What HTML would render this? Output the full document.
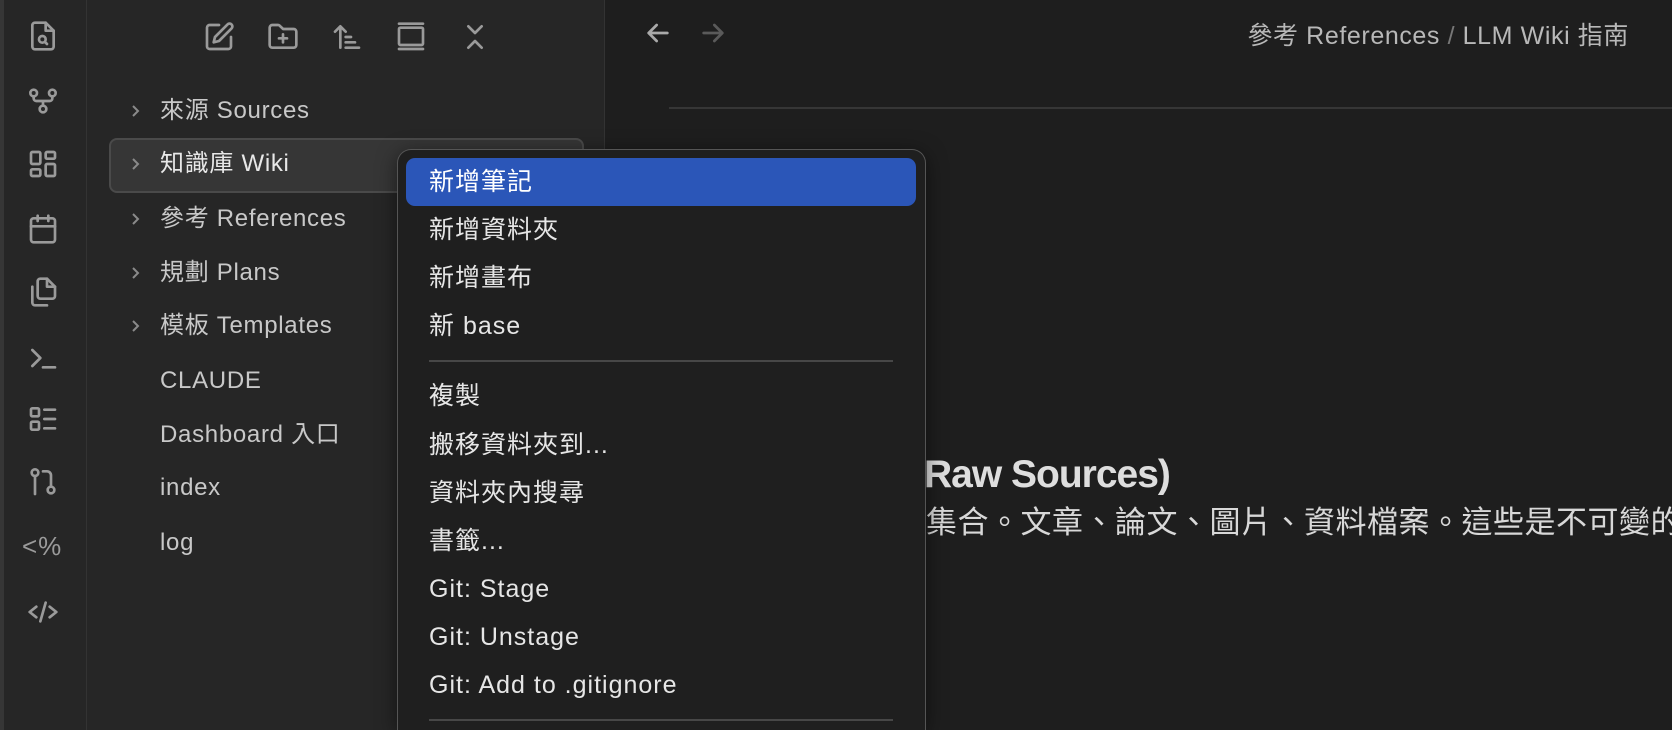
<!DOCTYPE html>
<html><head><meta charset="utf-8"><style>
*{margin:0;padding:0;box-sizing:border-box}
html,body{width:1672px;height:730px;overflow:hidden}
body{background:#1e1e1e;font-family:"Liberation Sans","Noto Sans CJK TC",sans-serif;position:relative;color:#dadada}
#rib{position:absolute;left:0;top:0;width:87px;height:730px;background:#262626;border-left:4px solid #363636;border-right:1px solid #333}
#side{position:absolute;left:87px;top:0;width:518px;height:730px;background:#262626;border-right:1px solid #333}
.ic{position:absolute;width:32px;height:32px;fill:none;stroke:#9a9a9a;stroke-width:2;stroke-linecap:round;stroke-linejoin:round}
.row{position:absolute;left:160px;font-size:24px;letter-spacing:0.7px;color:#c8c8c8;line-height:30px;height:30px;white-space:nowrap}
.chev{position:absolute;left:128px;width:16px;height:16px;fill:none;stroke:#8a8a8a;stroke-width:2}
#sel{position:absolute;left:109px;top:138px;width:475px;height:55px;border:2px solid #4a4a4a;background:#363636;border-radius:8px}
#menu{position:absolute;left:397px;top:149px;width:529px;height:581px;background:#1f1f1f;border:1.5px solid #555;border-bottom:none;border-radius:14px 14px 0 0;box-shadow:0 4px 20px rgba(0,0,0,.5)}
#hl{position:absolute;left:406px;top:158px;width:510px;height:48px;background:#2b56b8;border-radius:9px}
.mi{position:absolute;left:429px;font-size:25px;letter-spacing:1px;color:#e6e6e6;line-height:30px;white-space:nowrap}
.sep{position:absolute;left:429px;width:464px;height:1.5px;background:#474747}
</style></head><body>
<div id="rib"></div>
<div id="side"></div>

<svg class="ic" style="left:27px;top:20px" viewBox="0 0 24 24"><path d="M14 2H6a2 2 0 0 0-2 2v16a2 2 0 0 0 2 2h12a2 2 0 0 0 2-2V8z"/><path d="M14 2v6h6"/><circle cx="11.5" cy="14.5" r="2.5"/><path d="M13.5 16.5l1.5 1.5"/></svg>
<svg class="ic" style="left:27px;top:85px" viewBox="0 0 24 24"><circle cx="5" cy="6" r="2.5"/><circle cx="19" cy="6" r="2.5"/><circle cx="12" cy="18" r="2.5"/><path d="M5 8.5v1.5a2 2 0 0 0 2 2h10a2 2 0 0 0 2-2V8.5M12 12v3.5"/></svg>
<svg class="ic" style="left:27px;top:148px" viewBox="0 0 24 24"><rect x="3" y="3" width="7" height="9" rx="1"/><rect x="14" y="3" width="7" height="5" rx="1"/><rect x="14" y="12" width="7" height="9" rx="1"/><rect x="3" y="16" width="7" height="5" rx="1"/></svg>
<svg class="ic" style="left:27px;top:213px" viewBox="0 0 24 24"><rect x="3" y="4" width="18" height="18" rx="2"/><path d="M16 2v4M8 2v4M3 10h18"/></svg>
<svg class="ic" style="left:27px;top:276px" viewBox="0 0 24 24"><path d="M15 2H10a2 2 0 0 0-2 2v11a2 2 0 0 0 2 2h9a2 2 0 0 0 2-2V8z"/><path d="M15 2v6h6"/><path d="M4 8v12a2 2 0 0 0 2 2h9"/></svg>
<svg class="ic" style="left:27px;top:342px" viewBox="0 0 24 24"><path d="M4 6l6 6-6 6M12 19h9"/></svg>
<svg class="ic" style="left:27px;top:403px" viewBox="0 0 24 24"><rect x="3" y="4" width="6" height="6" rx="1"/><rect x="3" y="14" width="6" height="6" rx="1"/><path d="M13 5h8M13 12h8M13 19h8"/></svg>
<svg class="ic" style="left:27px;top:466px" viewBox="0 0 24 24"><circle cx="6" cy="5" r="2.5"/><circle cx="18" cy="18" r="2.5"/><path d="M6 7.5V21M12 4h3a3 3 0 0 1 3 3v8.5"/></svg>
<div style="position:absolute;left:22px;top:531px;font-size:26px;color:#9a9a9a;letter-spacing:1px">&lt;%</div>
<svg class="ic" style="left:27px;top:596px" viewBox="0 0 24 24"><path d="M7 8l-5 4 5 4M17 8l5 4-5 4M14 5l-4 14"/></svg>

<svg class="ic" style="left:203px;top:21px" viewBox="0 0 24 24"><path d="M12 3H5a2 2 0 0 0-2 2v14a2 2 0 0 0 2 2h14a2 2 0 0 0 2-2v-7"/><path d="M18.4 2.6a2.1 2.1 0 0 1 3 3L12 15l-4 1 1-4z"/></svg>
<svg class="ic" style="left:267px;top:21px" viewBox="0 0 24 24"><path d="M20 20a2 2 0 0 0 2-2V8a2 2 0 0 0-2-2h-7.9L9.4 3.4A2 2 0 0 0 7.9 3H4a2 2 0 0 0-2 2v13a2 2 0 0 0 2 2z"/><path d="M12 10v6M9 13h6"/></svg>
<svg class="ic" style="left:331px;top:21px" viewBox="0 0 24 24"><path d="M3 8l4-4 4 4M7 4v16M11 12h4M11 16h7M11 20h10"/></svg>
<svg class="ic" style="left:395px;top:21px" viewBox="0 0 24 24"><rect x="3" y="5" width="18" height="13" rx="1"/><path d="M3 21h18M3 2h18"/></svg>
<svg class="ic" style="left:459px;top:21px" viewBox="0 0 24 24"><path d="M7 20l5-5 5 5M7 4l5 5 5-5"/></svg>

<div id="sel"></div>
<svg class="chev" style="top:103px" viewBox="0 0 16 16"><path d="M5 3l5 5-5 5"/></svg>
<svg class="chev" style="top:156px" viewBox="0 0 16 16"><path d="M5 3l5 5-5 5"/></svg>
<svg class="chev" style="top:211px" viewBox="0 0 16 16"><path d="M5 3l5 5-5 5"/></svg>
<svg class="chev" style="top:265px" viewBox="0 0 16 16"><path d="M5 3l5 5-5 5"/></svg>
<svg class="chev" style="top:318px" viewBox="0 0 16 16"><path d="M5 3l5 5-5 5"/></svg>
<div class="row" style="top:96px">來源 Sources</div>
<div class="row" style="top:149px;color:#e8e8e8">知識庫 Wiki</div>
<div class="row" style="top:204px">參考 References</div>
<div class="row" style="top:258px">規劃 Plans</div>
<div class="row" style="top:311px">模板 Templates</div>
<div class="row" style="top:366px">CLAUDE</div>
<div class="row" style="top:420px">Dashboard 入口</div>
<div class="row" style="top:473px">index</div>
<div class="row" style="top:528px">log</div>

<svg class="ic" style="left:642px;top:17px;stroke:#aaa" viewBox="0 0 24 24"><path d="M19 12H5M11 6l-6 6 6 6"/></svg>
<svg class="ic" style="left:697px;top:17px;stroke:#5a5a5a" viewBox="0 0 24 24"><path d="M5 12h14M13 6l6 6-6 6"/></svg>
<div style="position:absolute;right:43px;top:16px;font-size:25px;letter-spacing:0.6px;color:#b8b8b8;white-space:nowrap">參考 References <span style="color:#777">/</span> LLM Wiki 指南</div>
<div style="position:absolute;left:669px;top:107px;width:1003px;height:2px;background:#363636"></div>
<div style="position:absolute;left:924px;top:453px;font-size:39px;font-weight:bold;color:#dedede;white-space:nowrap;letter-spacing:-1px">Raw Sources)</div>
<div style="position:absolute;left:926px;top:497px;font-size:31px;color:#d8d8d8;white-space:nowrap;letter-spacing:0.5px">集合。文章、論文、圖片、資料檔案。這些是不可變的</div>

<div id="menu"></div>
<div id="hl"></div>
<div class="mi" style="top:167px;color:#fff">新增筆記</div>
<div class="mi" style="top:215px">新增資料夾</div>
<div class="mi" style="top:263px">新增畫布</div>
<div class="mi" style="top:311px">新 base</div>
<div class="sep" style="top:360px"></div>
<div class="mi" style="top:381px">複製</div>
<div class="mi" style="top:430px">搬移資料夾到...</div>
<div class="mi" style="top:478px">資料夾內搜尋</div>
<div class="mi" style="top:526px">書籤...</div>
<div class="mi" style="top:574px">Git: Stage</div>
<div class="mi" style="top:622px">Git: Unstage</div>
<div class="mi" style="top:670px">Git: Add to .gitignore</div>
<div class="sep" style="top:719px"></div>
</body></html>
